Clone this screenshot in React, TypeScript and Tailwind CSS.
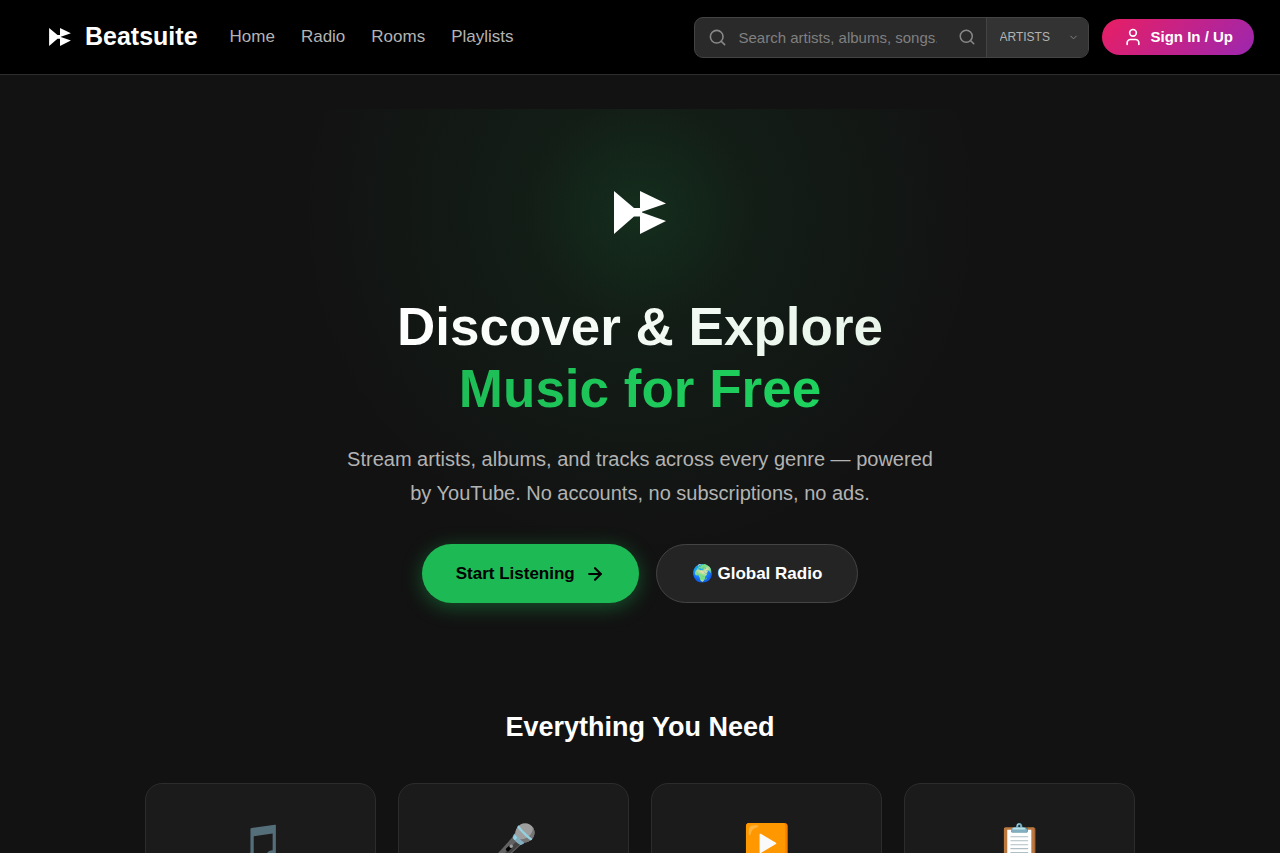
import { ArrowRight, ChevronDown, Search, User } from "lucide-react";

const links = ["Home", "Radio", "Rooms", "Playlists"];

const features = [
    { icon: "🎵", label: "Music" },
    { icon: "🎤", label: "Artists" },
    { icon: "▶️", label: "Videos" },
    { icon: "📋", label: "Playlists" },
];

const Logo = ({ className }: { className: string }) => (
    <svg viewBox="0 0 52 43" className={className} fill="#fff" aria-hidden="true">
        <path d="M0 0L20 17H26V0L52 12.5L28 20.8V21.4L52 30L26 43V25.5H20L0 43Z" />
    </svg>
);

const Header = () => (
    <header className="flex items-center justify-between bg-black border-b border-[#2e2e2e] pl-[49px] pr-[26px] h-[75px]">
        <div className="flex items-center gap-8">
            <a href="#" className="flex items-center gap-[14px] text-[25px] font-bold text-white">
                <Logo className="w-[22px] h-[18px]" />
                Beatsuite
            </a>
            <nav className="flex gap-[26px] text-[17px] text-[#b3b3b3]">
                {links.map((e) => (
                    <a key={e} href="#" className="hover:text-white">
                        {e}
                    </a>
                ))}
            </nav>
        </div>
        <div className="flex items-center gap-[13px]">
            <form className="flex items-stretch h-[41px] rounded-[9px] border border-[#444] bg-[#2a2a2a] overflow-hidden">
                <label className="flex items-center pl-[13px] gap-3">
                    <Search className="w-[19px] h-[19px] text-[#888]" strokeWidth={2} />
                    <input
                        type="text"
                        aria-label="Search"
                        placeholder="Search artists, albums, songs..."
                        className="w-[198px] pt-0.5 bg-transparent text-[15px] text-white placeholder:text-[#808080] outline-none"
                    />
                </label>
                <button type="button" aria-label="Submit search" className="flex items-center pl-[21px] pr-[10px]">
                    <Search className="w-[18px] h-[18px] text-[#888]" strokeWidth={2} />
                </button>
                <div className="relative flex border-l border-[#444] bg-[#333]">
                    <select
                        aria-label="Search type"
                        className="appearance-none w-[101px] pl-[13px] text-[12px] text-[#b3b3b3] bg-transparent outline-none"
                    >
                        <option>ARTISTS</option>
                        <option>ALBUMS</option>
                        <option>SONGS</option>
                    </select>
                    <ChevronDown className="absolute right-[9px] top-[14px] w-[11px] h-[11px] text-[#888] pointer-events-none" />
                </div>
            </form>
            <button
                type="button"
                className="flex items-center gap-2 h-9 px-[21px] rounded-full bg-[linear-gradient(135deg,#e91e63,#9c27b0)] text-[15px] font-bold text-white"
            >
                <User className="w-5 h-5" strokeWidth={2} />
                Sign In / Up
            </button>
        </div>
    </header>
);

const Hero = () => (
    <section className="mt-[34px] flex flex-col items-center pt-[82px] text-center bg-[radial-gradient(circle_110px_at_50%_103px,rgba(29,185,84,0.07),transparent),radial-gradient(circle_340px_at_50%_103px,rgba(29,185,84,0.1),transparent)]">
        <Logo className="w-[52px] h-[43px]" />
        <h1 className="mt-[62px] text-[53px] leading-[62px] font-bold">
            <span className="block text-transparent bg-clip-text bg-[linear-gradient(135deg,#fff,#e8f5e9)]">
                Discover &amp; Explore
            </span>
            <span className="block text-transparent bg-clip-text bg-[linear-gradient(135deg,#1db954,#1ed760)]">
                Music for Free
            </span>
        </h1>
        <p className="mt-[22px] max-w-[595px] text-[20px] leading-[34px] text-[#b3b3b3]">
            Stream artists, albums, and tracks across every genre — powered by YouTube. No accounts, no
            subscriptions, no ads.
        </p>
        <div className="mt-[34px] flex gap-[17px]">
            <button
                type="button"
                className="flex items-center gap-[10px] h-[59px] px-[34px] rounded-full bg-[#1db954] text-[17px] font-bold text-black shadow-[0_4px_20px_rgba(29,185,84,0.4)]"
            >
                Start Listening
                <ArrowRight className="w-5 h-5" strokeWidth={2.5} />
            </button>
            <button
                type="button"
                className="h-[59px] px-[35px] rounded-full bg-[#242424] border border-[#444] text-[17px] font-bold text-white"
            >
                🌍 Global Radio
            </button>
        </div>
    </section>
);

const Features = () => (
    <section className="mt-[104px] px-6 pb-16">
        <h2 className="text-center text-[27px] leading-10 font-bold text-white">Everything You Need</h2>
        <div className="mt-9 mx-auto max-w-[990px] grid grid-cols-4 gap-[22px]">
            {features.map((e) => (
                <div
                    key={e.label}
                    className="flex justify-center py-[34px] rounded-[17px] bg-[#1b1b1b] border border-[#2c2c2c] text-[38px] leading-[52px]"
                >
                    <span role="img" aria-label={e.label}>
                        {e.icon}
                    </span>
                </div>
            ))}
        </div>
    </section>
);

const App = () => {
    return (
        <div className="min-h-screen bg-[#121212] font-['Liberation_Sans',Arial,sans-serif]">
            <Header />
            <main>
                <Hero />
                <Features />
            </main>
        </div>
    );
};

export default App;
